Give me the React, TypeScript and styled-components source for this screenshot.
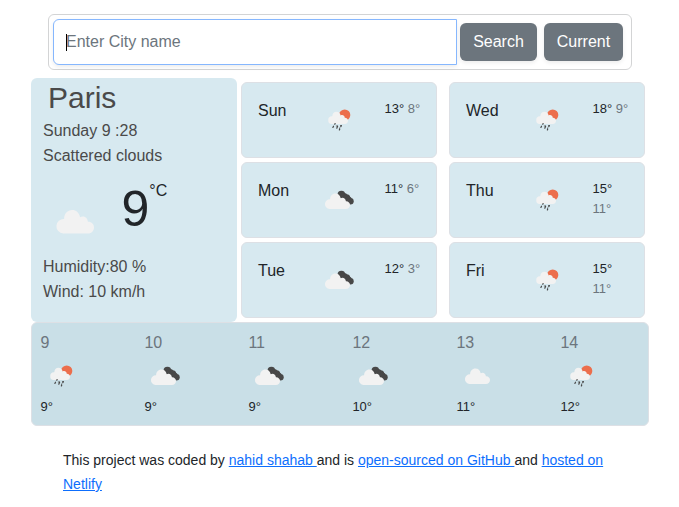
import React from "react";
import styled, { createGlobalStyle } from "styled-components";

const GlobalStyle = createGlobalStyle`
  *, *::before, *::after { box-sizing: border-box; }
  body {
    margin: 0;
    background: #fff;
    color: #212529;
    font: 16px/24px "Liberation Sans", Arial, sans-serif;
  }
`;

const Page = styled.main`
  width: 618px;
  margin-left: 31px;
  padding-top: 14px;
`;

const SearchBar = styled.form`
  display: flex;
  align-items: center;
  width: 584px;
  height: 56px;
  margin: 0 0 8px 17px;
  padding: 4px;
  border: 1px solid #d3d4d5;
  border-radius: 6px;
`;

const Field = styled.label`
  position: relative;
  flex: none;
  width: 404px;
  height: 46px;
  margin-right: 3px;

  &::after {
    content: "";
    position: absolute;
    left: 13px;
    top: 15px;
    width: 1px;
    height: 17px;
    background: #000;
  }
`;

const CityInput = styled.input`
  width: 100%;
  height: 100%;
  padding: 6px 12px;
  border: 1px solid #86b7fe;
  border-radius: 6px 0 0 6px;
  outline: 0;
  box-shadow: 0 2px 4px rgba(0, 0, 0, 0.075);
  font: inherit;
  color: #212529;

  &::placeholder {
    color: #6c757d;
    opacity: 1;
  }
`;

const Button = styled.button<{ $width: number }>`
  flex: none;
  width: ${(p) => p.$width}px;
  height: 38px;
  margin-right: 7px;
  padding: 0;
  border: 0;
  border-radius: 6px;
  background: #6c757d;
  box-shadow: 0 2px 4px rgba(0, 0, 0, 0.075);
  color: #fff;
  font: inherit;
`;

const Forecast = styled.div`
  display: flex;
  height: 244px;
`;

const Today = styled.section`
  width: 206px;
  padding: 2px 12px 0;
  border-radius: 6px;
  background: #d7e9f0;
  color: #4a4a4a;
`;

const City = styled.h1`
  margin: 0 0 2px 5px;
  font-size: 30px;
  font-weight: 400;
  line-height: 36px;
`;

const Detail = styled.div`
  height: 25px;
  line-height: 25px;
`;

const Current = styled.div`
  display: flex;
  height: 86px;
  margin-left: -6px;
`;

const BigIcon = styled.div`
  width: 75px;
  margin-top: 16px;
`;

const Degrees = styled.div`
  margin: 12px 0 0 9.5px;
  color: #212529;
  font-size: 50px;
  line-height: 58px;
`;

const Unit = styled.span`
  margin-top: 11px;
  color: #212529;
`;

const Days = styled.div`
  display: grid;
  grid-template-columns: repeat(2, 196px);
  grid-template-rows: repeat(3, 76px);
  gap: 4px 12px;
  padding: 4px;
`;

const DayCard = styled.article`
  display: grid;
  grid-template-columns: 56px 70.5px 48px;
  padding: 12px 0 0 16px;
  border: 1px solid #dde0e5;
  border-radius: 6px;
  background: #d7e9f0;
`;

const DayName = styled.span`
  padding-top: 4px;
`;

const Temps = styled.span`
  padding-top: 4px;
  font-size: 13px;
  line-height: 20px;
`;

const Low = styled.span`
  color: #6c757d;
`;

const Glyph = styled.svg<{ $size: number }>`
  display: block;
  width: ${(p) => p.$size}px;
  height: ${(p) => p.$size}px;
`;

const Hours = styled.section`
  display: grid;
  grid-template-columns: repeat(6, 104px);
  height: 104px;
  padding: 8px 0 0 8px;
  border: 1px solid #dde0e5;
  border-radius: 6px;
  background: #c9dfe7;
`;

const Hour = styled.div`
  display: flex;
  flex-direction: column;
`;

const HourLabel = styled.span`
  height: 20px;
  padding-left: 0.4px;
  color: #6c757d;
`;

const HourIcon = styled.div`
  height: 46px;
  margin-left: -4px;
`;

const HourTemp = styled.span`
  font-size: 13px;
  line-height: 20px;
  padding-left: 0.4px;
`;

const Footer = styled.footer`
  width: 560px;
  margin: 22px 0 0 32px;
  font-size: 14px;
  line-height: 24px;
`;

const Link = styled.a`
  color: #0d6efd;
  text-decoration: underline;
`;

type Sky = "cloud" | "broken" | "rain";

const CLOUD =
  "M17.5 33A4.85 4.85 0 1 1 18.1 23.3C18 19.9 20.4 17.4 23.4 17.4C26.2 17.4 28.1 19.2 28.7 22.2C30.7 20.9 33.7 22 33.9 25.2C36.4 25.1 38 26.9 38 29C38 31.2 36.4 33 34 33Z";

function WeatherIcon({ sky, size = 50 }: { sky: Sky; size?: number }) {
  return (
    <Glyph $size={size} viewBox="0 0 50 50" aria-hidden="true">
      {sky === "broken" && (
        <g fill="#484848">
          <circle cx="27.4" cy="19.7" r="3.9" />
          <circle cx="30" cy="21.3" r="3.4" />
          <circle cx="32.6" cy="22.8" r="3.6" />
          <circle cx="34.5" cy="24.8" r="3.2" />
          <circle cx="36.4" cy="26.2" r="3.3" />
        </g>
      )}
      {sky === "rain" && <circle cx="30.7" cy="20" r="5.6" fill="#ec6e4c" />}
      {sky === "rain" ? (
        <>
          <path d={CLOUD} fill="#f2f2f2" transform="translate(4 2.9) scale(.79)" />
          <g stroke="#484848" strokeWidth="1.2" strokeLinecap="round">
            <path d="M21.1 28.6L20.8 29.3M19.5 31.2L18.9 32.5M23.6 31.2L22.8 33.2M27.3 30.8L26.8 31.6M25.7 34.3L25.4 35" />
            <path d="M22.3 31H23.5M26.4 30.6H27.6M25.8 32.8L25.5 34" strokeWidth=".8" />
          </g>
        </>
      ) : (
        <path d={CLOUD} fill="#f2f2f2" transform={sky === "broken" ? "translate(-2 1)" : undefined} />
      )}
    </Glyph>
  );
}

const days: { name: string; sky: Sky; high: number; low: number }[] = [
  { name: "Sun", sky: "rain", high: 13, low: 8 },
  { name: "Wed", sky: "rain", high: 18, low: 9 },
  { name: "Mon", sky: "broken", high: 11, low: 6 },
  { name: "Thu", sky: "rain", high: 15, low: 11 },
  { name: "Tue", sky: "broken", high: 12, low: 3 },
  { name: "Fri", sky: "rain", high: 15, low: 11 },
];

const hours: { hour: number; sky: Sky; temp: number }[] = [
  { hour: 9, sky: "rain", temp: 9 },
  { hour: 10, sky: "broken", temp: 9 },
  { hour: 11, sky: "broken", temp: 9 },
  { hour: 12, sky: "broken", temp: 10 },
  { hour: 13, sky: "cloud", temp: 11 },
  { hour: 14, sky: "rain", temp: 12 },
];

export default function App() {
  return (
    <>
      <GlobalStyle />
      <Page>
        <SearchBar onSubmit={(e) => e.preventDefault()}>
          <Field>
            <CityInput placeholder="Enter City name" />
          </Field>
          <Button $width={77}>Search</Button>
          <Button $width={79} type="button">Current</Button>
        </SearchBar>
        <Forecast>
          <Today>
            <City>Paris</City>
            <Detail>Sunday 9 :28</Detail>
            <Detail>Scattered clouds</Detail>
            <Current>
              <BigIcon>
                <WeatherIcon sky="cloud" size={75} />
              </BigIcon>
              <Degrees>9</Degrees>
              <Unit>°C</Unit>
            </Current>
            <Detail>Humidity:80 %</Detail>
            <Detail>Wind: 10 km/h</Detail>
          </Today>
          <Days>
            {days.map((d) => (
              <DayCard key={d.name}>
                <DayName>{d.name}</DayName>
                <WeatherIcon sky={d.sky} />
                <Temps>
                  {d.high}° {d.low > 9 && <br />}
                  <Low>{d.low}°</Low>
                </Temps>
              </DayCard>
            ))}
          </Days>
        </Forecast>
        <Hours>
          {hours.map((h) => (
            <Hour key={h.hour}>
              <HourLabel>{h.hour}</HourLabel>
              <HourIcon>
                <WeatherIcon sky={h.sky} />
              </HourIcon>
              <HourTemp>{h.temp}°</HourTemp>
            </Hour>
          ))}
        </Hours>
        <Footer>
          This project was coded by <Link href="#">nahid shahab </Link>and is{" "}
          <Link href="#">open-sourced on GitHub </Link>and <Link href="#">hosted on Netlify</Link>
        </Footer>
      </Page>
    </>
  );
}
